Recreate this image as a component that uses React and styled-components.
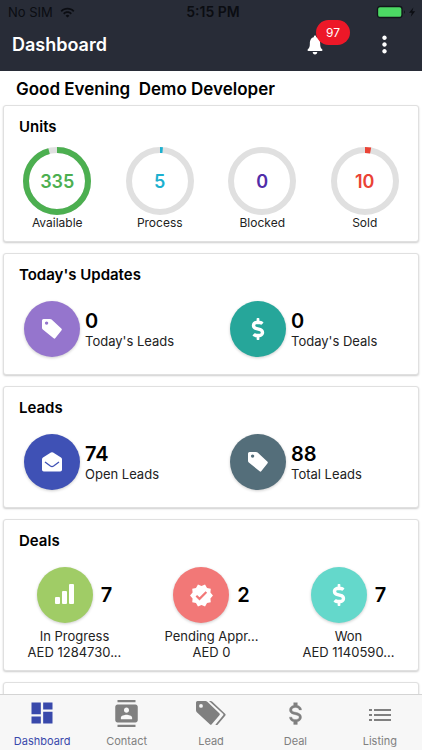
import React from "react";
import styled, { createGlobalStyle } from "styled-components";
import { MdDashboard, MdContacts, MdVerified, MdMoreVert, MdWifi } from "react-icons/md";
import { FaDollarSign } from "react-icons/fa";
import { IoIosNotifications } from "react-icons/io";

const GlobalStyle = createGlobalStyle`
  *, *::before, *::after { box-sizing: border-box; }
  body { margin: 0; background: #fff; font-family: Inter, "Liberation Sans", sans-serif; color: #000; }
  h1, h2, p { margin: 0; }
  button { font: inherit; border: 0; padding: 0; background: none; cursor: pointer; }
  svg { display: block; }
`;

const Screen = styled.div`
  display: flex;
  flex-direction: column;
  height: 100vh;
  overflow: hidden;
`;

const Header = styled.header`
  flex: none;
  background: #282c37;
`;

const StatusBar = styled.div`
  display: grid;
  grid-template-columns: 1fr auto 1fr;
  align-items: center;
  height: 24px;
  padding: 0 4px 0 8px;
  color: #0b0d12;
  font-size: 13px;
  line-height: 16px;
`;

const Carrier = styled.div`
  display: flex;
  align-items: center;
  gap: 7px;
`;

const Clock = styled.time`
  font-size: 14px;
  font-weight: 600;
`;

const Power = styled.div`
  display: flex;
  justify-content: flex-end;
`;

const TitleBar = styled.div`
  display: flex;
  align-items: center;
  height: 47px;
  padding: 0 24px 6px 12px;
  color: #fff;
`;

const Title = styled.h1`
  flex: 1;
  font-size: 18px;
  line-height: 24px;
  font-weight: 600;
`;

const Actions = styled.div`
  display: flex;
  align-items: center;
  gap: 44px;
`;

const IconButton = styled.button`
  position: relative;
  color: #fff;
`;

const Badge = styled.span`
  position: absolute;
  left: 13px;
  bottom: 12px;
  width: 34px;
  border-radius: 13px;
  background: #ed1828;
  font-size: 12px;
  line-height: 25px;
  text-align: center;
`;

const Main = styled.main`
  flex: 1;
  min-height: 0;
  overflow-y: auto;
  scrollbar-width: none;
  padding: 0 3px;
`;

const Greeting = styled.p`
  padding: 6px 13px 4px;
  font-size: 17px;
  line-height: 24px;
  font-weight: 600;
  white-space: pre;
`;

const CardList = styled.div`
  display: flex;
  flex-direction: column;
  gap: 11px;
`;

const CardBox = styled.section`
  padding: 10px 0;
  border: 1px solid #e0e0e0;
  border-radius: 3px;
  background: #fff;
  box-shadow: 0 1px 2px rgba(0, 0, 0, 0.2);
`;

const CardTitle = styled.h2`
  padding-left: 15px;
  font-size: 15px;
  line-height: 22px;
  font-weight: 600;
`;

const Units = styled.div`
  display: grid;
  grid-template-columns: repeat(4, 1fr);
  padding: 9px 2px 0;
`;

const Unit = styled.div`
  display: flex;
  flex-direction: column;
  align-items: center;
`;

const Dial = styled.div`
  display: grid;
  place-items: center;
  color: ${(p) => p.$color};
  font-size: 18px;
  font-weight: 600;

  > * { grid-area: 1 / 1; }
`;

const Label = styled.p`
  color: #222;
  font-size: ${(p) => (p.$small ? "12px" : "13px")};
  line-height: 16px;
  white-space: nowrap;
`;

const Pair = styled.div`
  display: grid;
  grid-template-columns: 1fr 1fr;
  padding: 15px 2px 7px 0;
`;

const Stat = styled.div`
  display: flex;
  align-items: center;
  gap: 5px;
  padding-left: 20px;
`;

const Circle = styled.div`
  display: grid;
  flex: none;
  place-items: center;
  width: 56px;
  height: 56px;
  border-radius: 50%;
  background: ${(p) => p.$color};
  box-shadow: 0 1px 3px rgba(0, 0, 0, 0.2);
  color: #fff;
`;

const Value = styled.p`
  font-size: 20px;
  line-height: 24px;
  font-weight: 600;
`;

const Deals = styled.div`
  display: grid;
  grid-template-columns: repeat(3, 1fr);
  padding: 15px 1px 0 2px;
`;

const Deal = styled.div`
  display: flex;
  flex-direction: column;
  align-items: center;
`;

const DealTop = styled.div`
  display: flex;
  align-items: center;
  gap: 8px;
  margin-bottom: 5px;
`;

const DealText = styled.div`
  text-align: center;
`;

const TabBar = styled.nav`
  display: grid;
  flex: none;
  grid-template-columns: repeat(5, 1fr);
  height: 56px;
  border-top: 1px solid #d4d4d4;
  background: #f7f7f7;
`;

const Tab = styled.button`
  display: flex;
  flex-direction: column;
  align-items: center;
  color: ${(p) => (p.$active ? "#3949ab" : "#808080")};
  font-size: 11px;
  line-height: 20px;
`;

const TabIcon = styled.span`
  display: grid;
  place-items: center;
  height: 36px;
`;

const Battery = () => (
  <svg width="42" height="14" viewBox="0 0 42 14" aria-label="Battery charging">
    <rect x="1.500" y="1.500" width="24.500" height="11" rx="2.500" fill="#4cd964" stroke="#11151a" strokeWidth="1.300" />
    <path d="M28 5.200q2 1.800 0 3.600z" fill="#11151a" />
    <path d="M37.400 2.400 33 7.800h2.800l-1 4 4.400-5.600h-2.900z" fill="#0b0d12" />
  </svg>
);

const TagIcon = () => (
  <svg width="20" height="20" viewBox="0 0 20 20" fill="currentColor">
    <path
      fillRule="evenodd"
      d="M1.500 0H8q.9 0 1.600.6l9.700 8.900q1 .9.100 1.900l-6 7.700q-.8 1-1.800.1L.8 10.400Q0 9.700 0 8.700V1.500Q0 0 1.500 0ZM4.600 2.400a1.700 1.700 0 1 0 0 3.400 1.700 1.700 0 0 0 0-3.400Z"
    />
  </svg>
);

const TagsIcon = () => (
  <svg width="30" height="24" viewBox="0 0 30 24" fill="currentColor">
    <path
      fillRule="evenodd"
      d="M1.500 0H9.500q1 0 1.800.7L23.300 12.300q1 1 .1 2l-7.700 8.900q-.9 1-1.900 0L.8 11.200Q0 10.400 0 9.300V1.500Q0 0 1.500 0ZM5 3a1.900 1.900 0 1 0 0 3.800A1.900 1.900 0 0 0 5 3Z"
    />
    <path d="M13 0h1.600q1 0 1.800.7l12.700 12q1 1 .1 2l-7.400 8.700q-.9 1-2.400.4l7.600-9.200q.8-1 0-1.800Z" />
  </svg>
);

const MailIcon = () => (
  <svg width="20" height="20" viewBox="0 0 20 20">
    <path d="M1 5.600 8.900.5q1.100-.7 2.200 0L19 5.600q1 .6 1 1.800V17.700q0 1.800-1.800 1.800H1.800Q0 19.500 0 17.700V7.400q0-1.200 1-1.800Z" fill="currentColor" />
    <path d="m3 10 5.400 4q1.600 1.100 3.200 0L17 10" fill="none" stroke="#3f51b5" strokeWidth="1.300" />
  </svg>
);

const BarsIcon = () => (
  <svg width="20" height="22" viewBox="0 0 20 22" fill="currentColor">
    <rect x="0" y="13" width="5" height="7" rx="1" />
    <rect x="7" y="7" width="5" height="13" rx="1" />
    <rect x="14" y="0" width="5" height="20" rx="1" />
  </svg>
);

const DollarIcon = () => (
  <svg width="29" height="29" viewBox="0 0 24 24" fill="currentColor" stroke="currentColor" strokeWidth="0.3">
    <path d="M7 15h2c0 1.080 1.370 2 3 2s3-.92 3-2c0-1.100-1.040-1.500-3.240-2.030C9.640 12.440 7 11.780 7 9c0-1.790 1.470-3.310 3.500-3.820V3h3v2.180C15.530 5.690 17 7.210 17 9h-2c0-1.080-1.370-2-3-2s-3 .92-3 2c0 1.100 1.040 1.500 3.240 2.030C14.360 11.560 17 12.220 17 15c0 1.790-1.470 3.310-3.500 3.820V21h-3v-2.180C8.470 18.310 7 16.790 7 15Z" />
  </svg>
);

const ListIcon = () => (
  <svg width="22" height="16" viewBox="0 0 22 16" fill="currentColor">
    <path d="M0 4h3v2H0zM5 4h17v2H5zM0 9h3v2H0zM5 9h17v2H5zM0 14h3v2H0zM5 14h17v2H5z" />
  </svg>
);

const RADIUS = 31;
const LENGTH = 2 * Math.PI * RADIUS;

function Ring({ color, share }) {
  return (
    <svg width="68" height="68" viewBox="0 0 68 68" fill="none" strokeWidth="6">
      <circle cx="34" cy="34" r={RADIUS} stroke="#e0e0e0" />
      {share > 0 && (
        <circle
          cx="34"
          cy="34"
          r={RADIUS}
          stroke={color}
          strokeDasharray={`${share * LENGTH} ${LENGTH}`}
          transform="rotate(-90 34 34)"
        />
      )}
    </svg>
  );
}

const units = [
  { label: "Available", value: 335, color: "#4caf50", share: 0.957 },
  { label: "Process", value: 5, color: "#1cb0cf", share: 0.014 },
  { label: "Blocked", value: 0, color: "#512da8", share: 0 },
  { label: "Sold", value: 10, color: "#ea4335", share: 0.029 },
];

const groups = [
  {
    title: "Today's Updates",
    stats: [
      { label: "Today's Leads", value: 0, color: "#9575cd", icon: <TagIcon /> },
      { label: "Today's Deals", value: 0, color: "#26a69a", icon: <FaDollarSign size={22} /> },
    ],
  },
  {
    title: "Leads",
    stats: [
      { label: "Open Leads", value: 74, color: "#3f51b5", icon: <MailIcon /> },
      { label: "Total Leads", value: 88, color: "#546e7a", icon: <TagIcon /> },
    ],
  },
];

const deals = [
  { label: "In Progress", value: 7, amount: "AED 1284730...", color: "#a0cc66", icon: <BarsIcon /> },
  { label: "Pending Appr...", value: 2, amount: "AED 0", color: "#f27877", icon: <MdVerified size={25} /> },
  { label: "Won", value: 7, amount: "AED 1140590...", color: "#64d8cb", icon: <FaDollarSign size={22} /> },
];

const tabs = [
  { label: "Dashboard", icon: <MdDashboard size={28} />, active: true },
  { label: "Contact", icon: <MdContacts size={27} /> },
  { label: "Lead", icon: <TagsIcon /> },
  { label: "Deal", icon: <DollarIcon /> },
  { label: "Listing", icon: <ListIcon /> },
];

function Card({ title, children }) {
  return (
    <CardBox>
      <CardTitle>{title}</CardTitle>
      {children}
    </CardBox>
  );
}

export default function App() {
  return (
    <Screen>
      <GlobalStyle />
      <Header>
        <StatusBar>
          <Carrier>
            No SIM
            <MdWifi size={15} />
          </Carrier>
          <Clock>5:15 PM</Clock>
          <Power>
            <Battery />
          </Power>
        </StatusBar>
        <TitleBar>
          <Title>Dashboard</Title>
          <Actions>
            <IconButton aria-label="Notifications, 97 unread">
              <IoIosNotifications size={24} />
              <Badge>97</Badge>
            </IconButton>
            <IconButton aria-label="More options">
              <MdMoreVert size={27} />
            </IconButton>
          </Actions>
        </TitleBar>
      </Header>

      <Main>
        <Greeting>Good Evening  Demo Developer</Greeting>
        <CardList>
          <Card title="Units">
            <Units>
              {units.map((u) => (
                <Unit key={u.label}>
                  <Dial $color={u.color}>
                    <Ring color={u.color} share={u.share} />
                    <span>{u.value}</span>
                  </Dial>
                  <Label $small>{u.label}</Label>
                </Unit>
              ))}
            </Units>
          </Card>

          {groups.map((g) => (
            <Card key={g.title} title={g.title}>
              <Pair>
                {g.stats.map((s) => (
                  <Stat key={s.label}>
                    <Circle $color={s.color}>{s.icon}</Circle>
                    <div>
                      <Value>{s.value}</Value>
                      <Label>{s.label}</Label>
                    </div>
                  </Stat>
                ))}
              </Pair>
            </Card>
          ))}

          <Card title="Deals">
            <Deals>
              {deals.map((d) => (
                <Deal key={d.label}>
                  <DealTop>
                    <Circle $color={d.color}>{d.icon}</Circle>
                    <Value>{d.value}</Value>
                  </DealTop>
                  <DealText>
                    <Label>{d.label}</Label>
                    <Label>{d.amount}</Label>
                  </DealText>
                </Deal>
              ))}
            </Deals>
          </Card>

          <CardBox />
        </CardList>
      </Main>

      <TabBar>
        {tabs.map((t) => (
          <Tab key={t.label} $active={t.active} aria-current={t.active ? "page" : undefined}>
            <TabIcon>{t.icon}</TabIcon>
            {t.label}
          </Tab>
        ))}
      </TabBar>
    </Screen>
  );
}
